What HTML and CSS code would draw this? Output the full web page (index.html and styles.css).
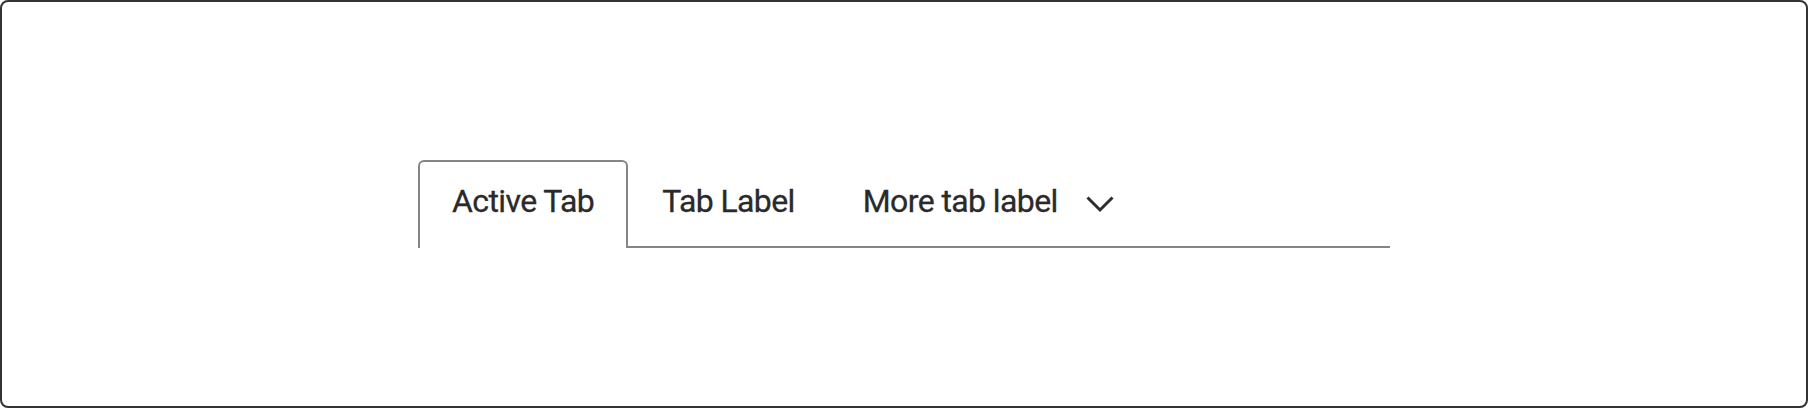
FILE: index.html
```html
<!DOCTYPE html>
<html lang="en">
<head>
<meta charset="utf-8">
<title>Tabs</title>
<link rel="stylesheet" href="styles.css">
</head>
<body>
<div class="frame">
  <div class="tablist" role="tablist">
    <div class="tab tab--active" role="tab" aria-selected="true">Active Tab</div>
    <div class="tab" role="tab">Tab Label</div>
    <div class="tab tab--more" role="tab">More tab label
      <svg class="chevron" width="28" height="17" viewBox="0 0 28 17" aria-hidden="true"><path d="M1.5 1.5 L14 14 L26.5 1.5" fill="none" stroke="#2e2e2e" stroke-width="3"/></svg>
    </div>
  </div>
</div>
</body>
</html>
```
FILE: styles.css
```css
html, body {
  margin: 0;
  padding: 0;
  background: #fff;
}
.frame {
  box-sizing: border-box;
  width: 1808px;
  height: 408px;
  border: 2px solid #333;
  border-radius: 8px;
  display: flex;
  align-items: center;
  justify-content: center;
}
.tablist {
  width: 972px;
  display: flex;
  align-items: flex-start;
  border-bottom: 2px solid #858585;
}
.tab {
  box-sizing: border-box;
  height: 86px;
  padding: 19px 32px 25px;
  border: 2px solid transparent;
  border-bottom: none;
  font-family: Roboto, "Liberation Sans", sans-serif;
  font-size: 32px;
  font-weight: 400;
  line-height: 40px;
  letter-spacing: -0.6px;
  color: #2a2a2a;
  -webkit-text-stroke: 0.3px #2a2a2a;
  white-space: nowrap;
  display: flex;
  align-items: flex-start;
}
.tab--active {
  height: 88px;
  margin-bottom: -2px;
  border-color: #858585;
  border-radius: 6px 6px 0 0;
  background: #fff;
}
.chevron {
  margin-left: 28px;
  margin-top: 15px;
  flex: none;
}
```
